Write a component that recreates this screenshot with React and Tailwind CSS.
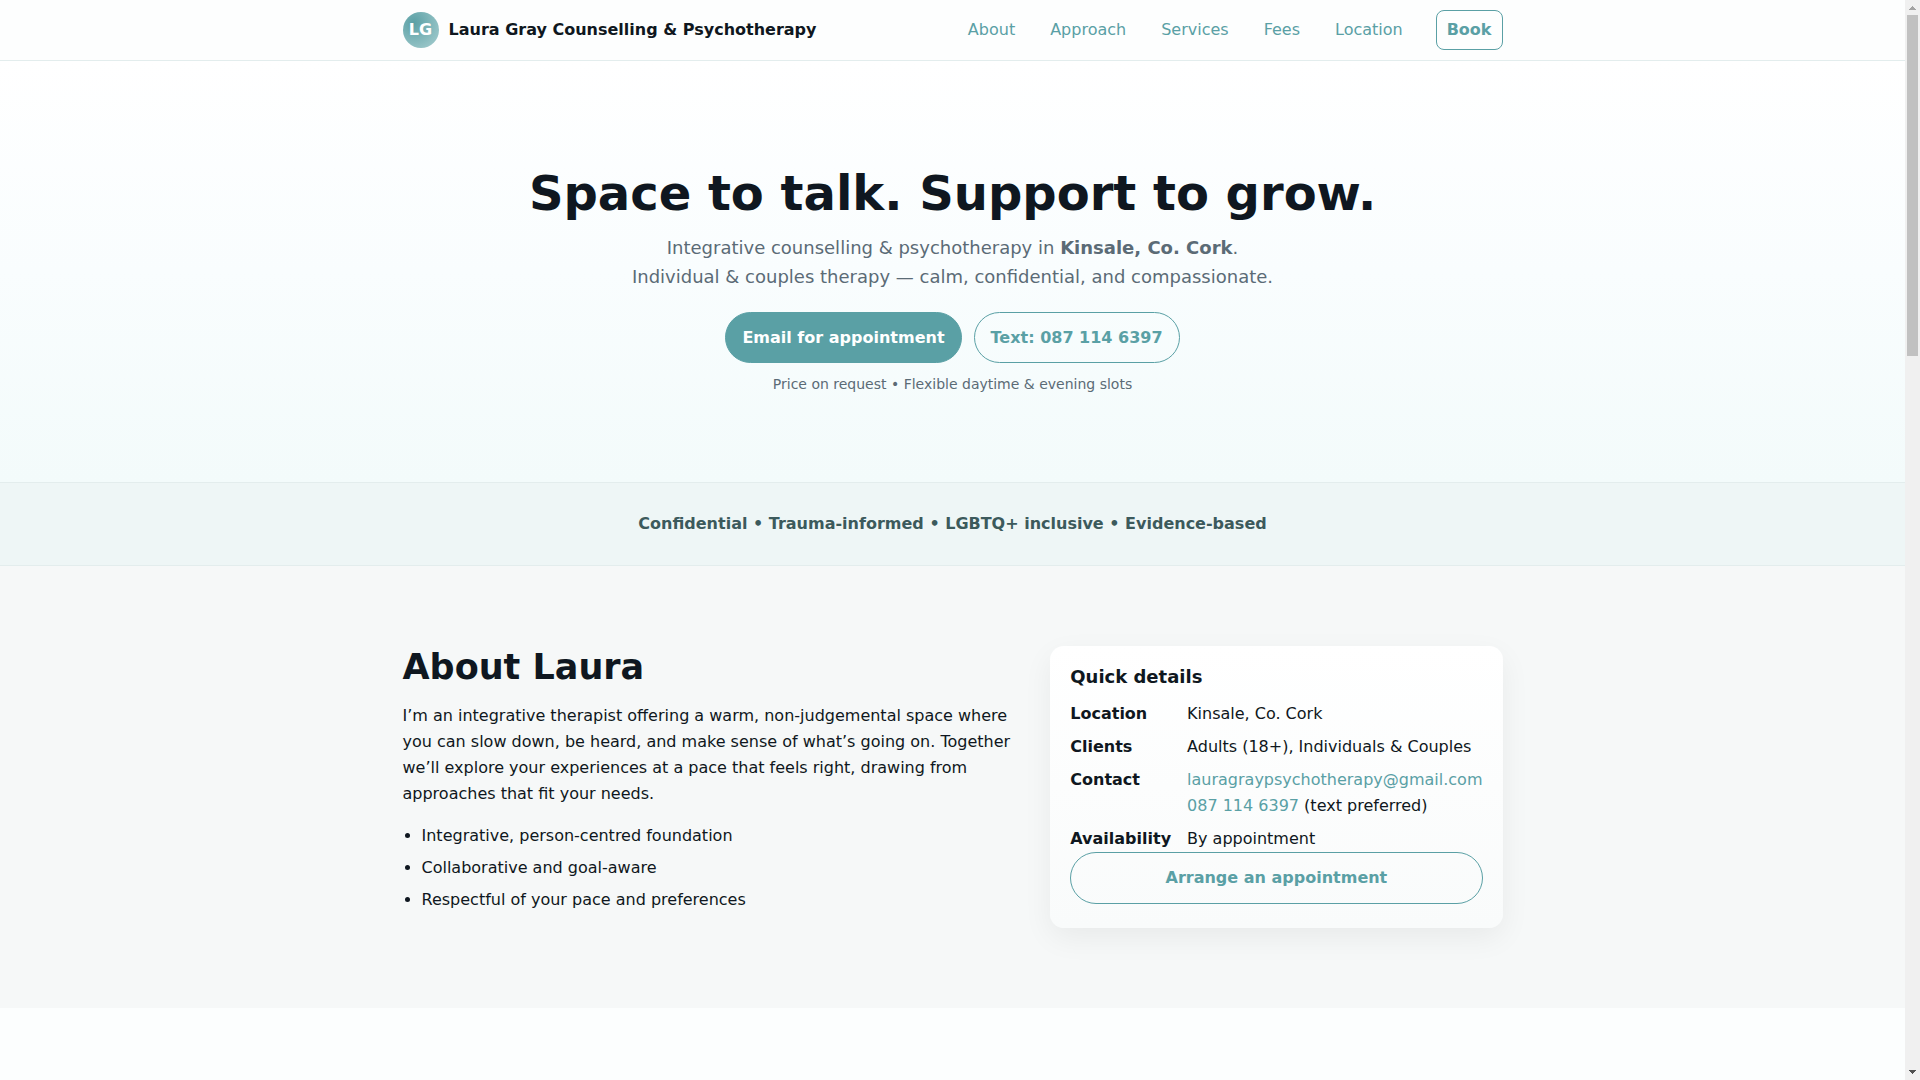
const navLinks = [
  { label: 'About', href: '#about' },
  { label: 'Approach', href: '#approach' },
  { label: 'Services', href: '#services' },
  { label: 'Fees', href: '#fees' },
  { label: 'Location', href: '#location' }
]

const points = [
  'Integrative, person-centred foundation',
  'Collaborative and goal-aware',
  'Respectful of your pace and preferences'
]

const email = 'lauragraypsychotherapy@gmail.com'
const phone = '087 114 6397'

function Header() {
  return (
    <header className="border-b border-[#e3eded] bg-[#fdfefe]">
      <div className="max-w-[1100px] mx-auto h-[60px] flex items-center justify-between">
        <a href="#top" className="flex items-center gap-[10px] font-bold">
          <span className="w-9 h-9 rounded-full flex items-center justify-center text-white bg-[radial-gradient(circle_at_30%_30%,#5aa0a5,#a9cfd1)]">
            LG
          </span>
          <span>Laura Gray Counselling &amp; Psychotherapy</span>
        </a>
        <nav className="flex items-center gap-[33px] text-[#5aa0a5]">
          <ul className="flex gap-[35px]">
            {navLinks.map(link => (
              <li key={link.href}>
                <a href={link.href}>{link.label}</a>
              </li>
            ))}
          </ul>
          <a
            href="#book"
            className="h-10 px-[10px] flex items-center border border-[#5aa0a5] rounded-lg font-bold"
          >
            Book
          </a>
        </nav>
      </div>
    </header>
  )
}

function Hero() {
  return (
    <section className="pt-[103px] pb-[86px] text-center bg-linear-to-b from-white via-[#f9fdfe] to-[#f3fbfb]">
      <h1 className="text-5xl leading-[58px] font-bold">Space to talk. Support to grow.</h1>
      <p className="mt-[11px] text-lg leading-[29px] text-[#5b6b76]">
        Integrative counselling &amp; psychotherapy in <strong>Kinsale, Co. Cork</strong>.
        <br />
        Individual &amp; couples therapy — calm, confidential, and compassionate.
      </p>
      <div className="mt-[21px] flex justify-center gap-3 font-bold">
        <a
          href={`mailto:${email}`}
          className="h-[51px] px-4 flex items-center border border-[#5aa0a5] rounded-full bg-[#5aa0a5] text-white"
        >
          Email for appointment
        </a>
        <a
          href="sms:0871146397"
          className="h-[51px] px-4 flex items-center border border-[#5aa0a5] rounded-full text-[#5aa0a5]"
        >
          Text: {phone}
        </a>
      </div>
      <p className="mt-[10px] text-sm leading-[23px] text-[#5b6b76]">
        Price on request • Flexible daytime &amp; evening slots
      </p>
    </section>
  )
}

function About() {
  return (
    <section id="about" className="py-20 bg-[#f6f8f8]">
      <div className="max-w-[1100px] mx-auto grid grid-cols-[1fr_auto] items-start gap-10">
        <div>
          <h2 className="text-[35px] leading-[42px] font-bold">About Laura</h2>
          <p className="mt-[15px]">
            I’m an integrative therapist offering a warm, non-judgemental space where you can slow
            down, be heard, and make sense of what’s going on. Together we’ll explore your
            experiences at a pace that feels right, drawing from approaches that fit your needs.
          </p>
          <ul className="mt-4 pl-[19px] list-disc space-y-[6px]">
            {points.map(point => (
              <li key={point}>{point}</li>
            ))}
          </ul>
        </div>

        <aside className="px-5 pt-5 pb-6 rounded-[14px] bg-linear-to-b from-white to-[#f9fbfb] shadow-[0_10px_30px_rgba(0,0,0,0.06)]">
          <h3 className="text-lg leading-[22px] font-bold">Quick details</h3>
          <dl className="mt-[13px] grid grid-cols-[auto_1fr] gap-x-4 gap-y-[7px]">
            <dt className="font-bold">Location</dt>
            <dd>Kinsale, Co. Cork</dd>
            <dt className="font-bold">Clients</dt>
            <dd>Adults (18+), Individuals &amp; Couples</dd>
            <dt className="font-bold">Contact</dt>
            <dd>
              <a href={`mailto:${email}`} className="text-[#5aa0a5]">{email}</a>
              <br />
              <a href="sms:0871146397" className="text-[#5aa0a5]">{phone}</a> (text preferred)
            </dd>
            <dt className="font-bold">Availability</dt>
            <dd>By appointment</dd>
          </dl>
          <a
            href="#book"
            className="h-[52px] flex items-center justify-center border border-[#5aa0a5] rounded-full font-bold text-[#5aa0a5]"
          >
            Arrange an appointment
          </a>
        </aside>
      </div>
    </section>
  )
}

function ScrollTrack() {
  return (
    <div className="w-[15px] h-screen shrink-0 flex flex-col items-center bg-[#f0f0f0]" aria-hidden="true">
      <svg className="w-[15px] h-[15px] shrink-0" viewBox="0 0 15 15" shapeRendering="crispEdges">
        <path d="M7 6h1v1h1v1h1v1h1v1H4V9h1V8h1V7h1z" fill="#a3a3a3" />
      </svg>
      <div className="w-[11px] h-[341px] bg-[#c1c1c1]" />
      <svg className="mt-auto w-[15px] h-[15px] shrink-0" viewBox="0 0 15 15" shapeRendering="crispEdges">
        <path d="M4 5h7v1h-1v1H9v1H8v1H7V8H6V7H5V6H4z" fill="#505050" />
      </svg>
    </div>
  )
}

export default function App() {
  return (
    <div
      id="top"
      className="h-screen flex overflow-hidden bg-[#fcfefe] text-[#0f1720] text-base leading-[26px] font-['DejaVu_Sans',sans-serif]"
    >
      <main className="flex-1 min-w-0">
        <Header />
        <Hero />
        <section className="py-7 border-y border-[#e3eded] bg-[#eef6f6] text-center font-bold text-[#3c5a5c]">
          Confidential • Trauma-informed • LGBTQ+ inclusive • Evidence-based
        </section>
        <About />
      </main>
      <ScrollTrack />
    </div>
  )
}
